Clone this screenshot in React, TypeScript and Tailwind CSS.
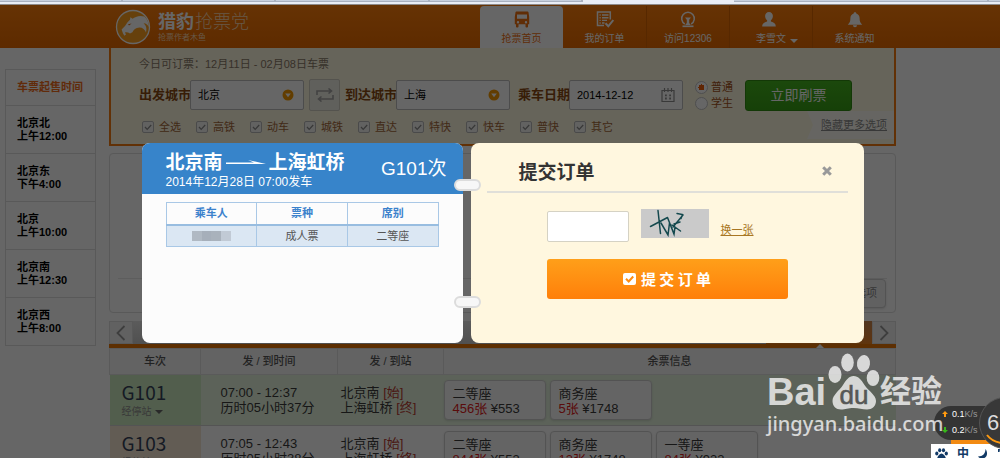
import React from 'react';

const saleTimes = [
  ['北京北', '上午12:00'],
  ['北京东', '下午4:00'],
  ['北京', '上午10:00'],
  ['北京南', '上午12:30'],
  ['北京西', '上午8:00'],
];

const trainTypes = ['全选', '高铁', '动车', '城铁', '直达', '特快', '快车', '普快', '其它'];

type Seat = { name: string; left: string; price: string };
type Train = { no: string; time: string; duration: string; seats: Seat[]; current: boolean };

const trains: Train[] = [
  {
    no: 'G101',
    time: '07:00 - 12:37',
    duration: '历时05小时37分',
    current: true,
    seats: [
      { name: '二等座', left: '456张', price: '¥553' },
      { name: '商务座', left: '5张', price: '¥1748' },
    ],
  },
  {
    no: 'G103',
    time: '07:05 - 12:43',
    duration: '历时05小时38分',
    current: false,
    seats: [
      { name: '二等座', left: '844张', price: '¥553' },
      { name: '商务座', left: '13张', price: '¥1748' },
      { name: '一等座', left: '84张', price: '¥933' },
    ],
  },
];

function BrowserStrip() {
  return (
    <div className="flex h-[5px] shrink-0 flex-col border-b border-[#8d8a8a] bg-[#e9edf5]">
      <div className="flex h-[2px]">
        <div className="w-[123px] border-r-2 border-b border-[#a9b1bf] bg-[#c6cfdd]" />
        <div className="w-[153px] border-r-2 border-b border-[#a9b1bf] bg-[#c6cfdd]" />
        <div className="w-[154px] border-r-2 border-b border-[#a9b1bf] bg-[#c6cfdd]" />
        <div className="w-[153px] border-r-2 border-b border-[#a9b1bf] bg-[#c6cfdd]" />
        <div className="w-[151px]" />
        <div className="w-[255px] border-r-2 border-b border-[#a9b1bf] bg-[#c6cfdd]" />
        <div className="flex-1 border-b border-[#a9b1bf] bg-[#c6cfdd]" />
      </div>
    </div>
  );
}

function CheetahLogo() {
  return (
    <svg viewBox="0 0 36 36" className="size-9 shrink-0" aria-hidden="true">
      <circle cx="18" cy="18" r="16.5" fill="#ffa01e" stroke="#fff" strokeWidth="1.3" />
      <path
        d="M8 24.5 6.6 20.5 10 17 12.5 13.2 15 10.8 15.4 8.2 17.6 9.8C20 8.2 24 6 29.4 7.6 32.5 10.5 34 14.5 33.8 18.4 33.2 16 31 14.4 28.6 14.3 32 17.4 31.6 20.4 31 23.6 30 20.4 27.6 18.4 24.4 18.4 20.6 18.6 18.600 20.6 17.400 23.200L15 24.4C13.4 23.4 11.4 23 10 23.4L11 25.6 9.4 26.8Z"
        fill="#fff"
      />
      <path d="M13 15.2 16.6 14.6 14 16.6Z" fill="#e07010" />
    </svg>
  );
}

function BusIcon() {
  return (
    <svg viewBox="0 0 16 17" className="h-[17px] w-4" fill="currentColor" aria-hidden="true">
      <path
        fillRule="evenodd"
        d="M3 .5h10c1 0 1.6.5 1.6 1.4L15.2 6v7.2H14v2.6c0 .5-.4.8-.9.8h-.7c-.5 0-.9-.3-.9-.8v-2.6h-7v2.6c0 .5-.4.8-.9.8h-.7c-.5 0-.9-.3-.9-.8v-2.6H.8V6l.6-4.1C1.400 1 2 .5 3 .5Zm0 3v4.300h10V3.500ZM4 10a1.200 1.200 0 1 0 0 2.400A1.200 1.200 0 0 0 4 10Zm8 0a1.200 1.200 0 1 0 0 2.400A1.200 1.200 0 0 0 12 10Z"
      />
    </svg>
  );
}

function OrdersIcon() {
  return (
    <svg viewBox="0 0 18 17" className="h-[17px] w-[18px]" fill="none" stroke="currentColor" aria-hidden="true">
      <path d="M14.300 8.500V1H1.500v13.500H8" strokeWidth="1.500" />
      <path d="M3.500 4h1.200M6 4h6.500M3.500 6.700h1.200M6 6.700h6.500M3.500 9.400h1.200M6 9.400h5M3.500 12h1.200M6 12h2.500" strokeWidth="1.400" />
      <path d="m9.500 12.300 2.800 3 5-6.300" strokeWidth="2" />
    </svg>
  );
}

function RailIcon() {
  return (
    <svg viewBox="0 0 16 17" className="h-[17px] w-4" fill="none" stroke="currentColor" aria-hidden="true">
      <path d="M4.800 13A6.300 6.300 0 1 1 11.200 13" strokeWidth="1.500" />
      <path d="M5 6.500h6L9.200 8.800V12l1.600 2H5.200l1.600-2V8.800Z" fill="currentColor" stroke="none" />
      <path d="M2.500 15.300h11" strokeWidth="1.700" />
    </svg>
  );
}

function UserIcon() {
  return (
    <svg viewBox="0 0 16 17" className="h-[17px] w-4" fill="currentColor" aria-hidden="true">
      <path d="M8 1c2.300 0 3.900 1.700 3.900 4.100 0 1.800-.8 3.400-2 4.200v1.100c2.900.7 4.900 2 4.900 5.100H1.200c0-3.100 2-4.400 4.900-5.100V9.300c-1.200-.8-2-2.400-2-4.200C4.100 2.700 5.700 1 8 1Z" />
    </svg>
  );
}

function BellIcon() {
  return (
    <svg viewBox="0 0 16 17" className="h-[17px] w-4" fill="currentColor" aria-hidden="true">
      <path d="M8 1.200c.8 0 1.300.5 1.300 1.200 2 .6 3.300 2.300 3.300 4.600 0 3.300.7 4.800 2.600 6.800H.8C2.700 11.800 3.400 10.300 3.400 7c0-2.300 1.300-4 3.300-4.600 0-.7.500-1.200 1.300-1.200ZM6 14.300h4c0 1.200-.8 2-2 2s-2-.8-2-2Z" />
    </svg>
  );
}

function Header() {
  return (
    <header className="flex h-[43px] shrink-0 items-end justify-between bg-linear-to-b from-[#ff7f0c] to-[#e96a00] pr-[104px] pl-[115px] text-white">
      <div className="flex h-full items-center gap-[7px]">
        <CheetahLogo />
        <div className="flex flex-col">
          <h1 className="flex gap-px text-[18px] leading-[22px]">
            <span className="font-bold">猎豹</span>
            <span className="font-light text-[#ffd9b0]">抢票党</span>
          </h1>
          <span className="text-[8px] leading-[10px] text-[#ffd9b0]">抢票作者木鱼</span>
        </div>
      </div>
      <nav className="flex h-[42px] text-[10px] leading-[14px]">
        <a href="#home" className="flex w-[83px] flex-col items-center gap-1 rounded-t bg-white pt-[5px] text-[#f0700f]">
          <BusIcon />
          抢票首页
        </a>
        <a href="#orders" className="flex w-[84px] flex-col items-center gap-1 border-r border-[#d96500] pt-[5px]">
          <OrdersIcon />
          我的订单
        </a>
        <a href="#12306" className="flex w-[83px] flex-col items-center gap-1 border-r border-[#d96500] pt-[5px]">
          <RailIcon />
          访问12306
        </a>
        <a href="#user" className="flex w-[83px] flex-col items-center gap-1 border-r border-[#d96500] pt-[5px]">
          <span className="mr-1">
            <UserIcon />
          </span>
          <span className="flex items-center gap-1 pl-3">
            李雪文
            <svg viewBox="0 0 8 4" className="mt-1 h-1 w-2" fill="currentColor" aria-hidden="true">
              <path d="M0 0h8L4 4Z" />
            </svg>
          </span>
        </a>
        <a href="#notice" className="flex w-[83px] flex-col items-center gap-1 pt-[5px]">
          <BellIcon />
          系统通知
        </a>
      </nav>
    </header>
  );
}

function Sidebar() {
  return (
    <aside className="mt-[21px] w-[91px] shrink-0 self-start border border-[#dedede] text-[11px] leading-[13px] font-bold text-black">
      <h2 className="flex h-[35px] items-center pl-[11px] text-[#f26c1b]">车票起售时间</h2>
      <ul>
        {saleTimes.map(([city, time]) => (
          <li key={city} className="flex h-12 flex-col justify-center border-t border-[#dedede] pl-[11px]">
            <span>{city}</span>
            <span>{time}</span>
          </li>
        ))}
      </ul>
    </aside>
  );
}

function CityField({ id, label, value }: { id: string; label: string; value: string }) {
  return (
    <div className="flex items-center">
      <label htmlFor={id} className="w-[51px] text-[13px] font-bold whitespace-nowrap text-[#8a4a12]">
        {label}
      </label>
      <div className="flex h-[30px] w-[114px] items-center rounded-xs border border-[#bdbdbd] bg-white pr-[9px] pl-[7px]">
        <input id={id} defaultValue={value} className="w-full min-w-0 text-[11px] text-black outline-none" />
        <svg viewBox="0 0 12 12" className="size-3 shrink-0" aria-hidden="true">
          <circle cx="6" cy="6" r="5.500" fill="#f59a00" />
          <path d="M3.200 4.500h5.600L6 8.300Z" fill="#fff" />
        </svg>
      </div>
    </div>
  );
}

function SearchPanel() {
  return (
    <form className="flex h-[98px] flex-col border-x-2 border-b-2 border-[#f57c10] bg-[#fff9e1] pl-7 text-[11px]">
      <p className="mt-2 h-4 leading-[16px] text-[#8a7a68]">今日可订票：12月11日 - 02月08日车票</p>
      <div className="mt-[7px] flex items-center">
        <CityField id="from" label="出发城市" value="北京" />
        <button
          type="button"
          aria-label="交换城市"
          className="mx-[5px] flex h-8 w-[31px] items-center justify-center rounded-xs border border-[#d2cfc4] bg-[#f1efe6] text-[#a5a5a5]"
        >
          <svg viewBox="0 0 18 14" className="h-3.5 w-[18px]" fill="none" stroke="currentColor" strokeWidth="1.600" aria-hidden="true">
            <path d="M1 7V3h14M12.500.5 15.500 3l-3 2.500M17 7v4H3M5.500 8.500l-3 2.500 3 2.500" />
          </svg>
        </button>
        <CityField id="to" label="到达城市" value="上海" />
        <div className="ml-2 flex items-center">
          <label htmlFor="date" className="w-[51px] text-[13px] font-bold whitespace-nowrap text-[#8a4a12]">
            乘车日期
          </label>
          <div className="flex h-[30px] w-[114px] items-center rounded-xs border border-[#bdbdbd] bg-white px-[7px]">
            <input id="date" defaultValue="2014-12-12" className="w-full min-w-0 text-[11px] text-black outline-none" />
            <svg viewBox="0 0 14 14" className="size-3.5 shrink-0 text-[#8f8f8f]" fill="none" stroke="currentColor" aria-hidden="true">
              <path d="M1 2.500h12v11H1ZM3.500 0v4M7 0v4M10.500 0v4" strokeWidth="1.200" />
              <path d="M4 7.300h1.800M8.200 7.300H10M4 10.500h1.800M8.200 10.500H10" strokeWidth="1.800" />
            </svg>
          </div>
        </div>
        <fieldset className="ml-3 flex flex-col text-[#a4531a]">
          <label className="flex h-4 items-center gap-[3px] leading-4">
            <input
              type="radio"
              name="kind"
              defaultChecked
              className="size-[13px] appearance-none rounded-full border border-[#c4c4c4] bg-white checked:bg-[radial-gradient(circle,#f0600a_0_3px,#fff_3px)]"
            />
            普通
          </label>
          <label className="flex h-4 items-center gap-[3px] leading-4">
            <input
              type="radio"
              name="kind"
              className="size-[13px] appearance-none rounded-full border border-[#c4c4c4] bg-white checked:bg-[radial-gradient(circle,#f0600a_0_3px,#fff_3px)]"
            />
            学生
          </label>
        </fieldset>
        <button type="button" className="ml-3 h-[31px] w-[107px] rounded-[3px] border border-[#308c12] bg-linear-to-b from-[#45b41f] to-[#38a015] text-[14px] text-white">
          立即刷票
        </button>
      </div>
      <div className="flex items-start justify-between">
        <div className="flex pt-2 pl-[3px] text-[#a4683a]">
          {trainTypes.map((t) => (
            <label key={t} className="flex h-4 w-[54px] items-center gap-[5px]">
              <span className="relative flex">
                <input type="checkbox" defaultChecked className="size-3 appearance-none rounded-xs border border-[#b9b9b9] bg-[#f6f6f2]" />
                <svg viewBox="0 0 12 12" className="pointer-events-none absolute inset-0 size-3" fill="none" stroke="#8c8c8c" strokeWidth="1.300" aria-hidden="true">
                  <path d="m3 6 2.200 2.400L9.200 4" />
                </svg>
              </span>
              {t}
            </label>
          ))}
        </div>
        <a
          href="#hide"
          className="flex h-7 w-[87px] items-center justify-end bg-[#fffdf4] pr-[7px] text-[#8c8c8c] underline [clip-path:polygon(0_0,100%_0,100%_100%,0_100%,6px_50%)]"
        >
          隐藏更多选项
        </a>
      </div>
    </form>
  );
}

function FilterPanel() {
  return (
    <section className="mt-[7px] flex h-40 flex-col justify-end rounded border border-[#dedede] px-2">
      <div className="flex h-[34px] items-start justify-end border-t border-[#e9e9e9]">
        <button type="button" className="mr-px h-[29px] rounded-sm border border-[#cfcfcf] bg-[#f3f3f3] px-2 text-[11px] text-[#8c8c8c] shadow-sm">
          更多选项
        </button>
      </div>
    </section>
  );
}

function DateBar() {
  return (
    <div className="mt-2 flex h-[27px] shrink-0 border-b-4 border-[#e97707]">
      <button type="button" aria-label="前一天" className="flex w-6 items-center justify-center border border-[#dedede] bg-[#f3f3f3] text-[#9a9a9a]">
        <svg viewBox="0 0 10 16" className="h-4 w-2.5" fill="none" stroke="currentColor" strokeWidth="1.800" aria-hidden="true">
          <path d="M8.500 1 1.500 8l7 7" />
        </svg>
      </button>
      <div className="flex-1 bg-linear-to-b from-[#e4e4e4] to-[#c8c8c8]" />
      <div className="relative w-[106px] bg-linear-to-b from-[#c98850] to-[#ef8420]">
        <svg viewBox="0 0 8 4" className="absolute -bottom-1 left-[50px] h-1 w-2" fill="#fff" aria-hidden="true">
          <path d="M4 0 8 4H0Z" />
        </svg>
      </div>
      <button type="button" aria-label="后一天" className="flex w-6 items-center justify-center border border-[#dedede] bg-[#f3f3f3] text-[#9a9a9a]">
        <svg viewBox="0 0 10 16" className="h-4 w-2.5" fill="none" stroke="currentColor" strokeWidth="1.800" aria-hidden="true">
          <path d="m1.500 1 7 7-7 7" />
        </svg>
      </button>
    </div>
  );
}

function TrainTable() {
  return (
    <table className="w-full shrink-0 table-fixed border-collapse text-[13px] leading-[15px] text-[#3a3a3a]">
      <colgroup>
        <col className="w-[91px]" />
        <col className="w-[137px]" />
        <col className="w-[106px]" />
        <col />
      </colgroup>
      <thead>
        <tr className="h-[26px] bg-[#f7f7f7] text-[11px] text-[#555]">
          <th className="border border-[#e2e2e2] font-medium">车次</th>
          <th className="border border-[#e2e2e2] font-medium">发 / 到时间</th>
          <th className="border border-[#e2e2e2] font-medium">发 / 到站</th>
          <th className="border border-[#e2e2e2] font-medium">余票信息</th>
        </tr>
      </thead>
      <tbody>
        {trains.map((t) => (
          <tr key={t.no} className={t.current ? 'h-[51px] border-b border-[#d2d2d2] bg-[#e6f5df]' : 'h-[51px] border-b border-[#d2d2d2]'}>
            <td className={t.current ? 'bg-[#cdebc0] pl-3' : 'bg-[#f4e6d3] pl-3'}>
              <div className="font-['Noto_Sans_CJK_SC',sans-serif] text-[19px] leading-[24px] text-[#35435a]">{t.no}</div>
              <a href="#stops" className="flex items-center gap-[3px] text-[10px] leading-[16px] text-[#8f8f8f]">
                经停站
                <svg viewBox="0 0 8 4" className="h-1 w-2" fill="#666" aria-hidden="true">
                  <path d="M0 0h8L4 4Z" />
                </svg>
              </a>
            </td>
            <td className="pl-5">
              <div>{t.time}</div>
              <div>{t.duration}</div>
            </td>
            <td className="pl-[3px] whitespace-nowrap">
              <div>
                北京南 <span className="text-[#b83c32]">[始]</span>
              </div>
              <div>
                上海虹桥 <span className="text-[#b83c32]">[终]</span>
              </div>
            </td>
            <td>
              <div className="flex gap-1">
                {t.seats.map((s) => (
                  <div key={s.name} className="h-10 w-[102px] rounded border border-[#d0d0d0] bg-[#fbfbfb] px-2 pt-[5px] shadow-sm">
                    <div>{s.name}</div>
                    <div>
                      <span className="text-[#e02020]">{s.left}</span> {s.price}
                    </div>
                  </div>
                ))}
              </div>
            </td>
          </tr>
        ))}
      </tbody>
    </table>
  );
}

function TicketCard() {
  return (
    <section className="w-[321px] overflow-hidden rounded-lg bg-[#fcfcfc]">
      <div className="flex h-[51px] items-center justify-between bg-[#3784ca] pr-4 pl-6 text-white">
        <div className="flex flex-col pt-1">
          <h2 className="flex items-center gap-[3px] text-[19px] leading-[23px] font-bold">
            北京南
            <svg viewBox="0 0 40 10" className="h-2.5 w-10" fill="#fff" aria-hidden="true">
              <path d="M0 4.500h28L22 2 40 6H0Z" />
            </svg>
            上海虹桥
          </h2>
          <p className="text-[12px] leading-[16px]">2014年12月28日 07:00发车</p>
        </div>
        <div className="text-[19px] leading-[22px]">G101次</div>
      </div>
      <table className="mx-6 mt-2 w-[273px] table-fixed border-collapse text-center text-[11px]">
        <thead>
          <tr className="h-[22px] border-b-2 border-[#98bde0] text-[#3c82cc]">
            <th className="border border-[#a9c8e6] font-bold">乘车人</th>
            <th className="border border-[#a9c8e6] font-bold">票种</th>
            <th className="border border-[#a9c8e6] font-bold">席别</th>
          </tr>
        </thead>
        <tbody>
          <tr className="h-[22px] bg-[#dbe7f3] text-[#555]">
            <td className="border border-[#a9c8e6]">
              <div className="mx-auto flex h-2.5 w-[39px]" aria-hidden="true">
                <span className="flex-1 bg-[#b0b9c3]" />
                <span className="flex-1 bg-[#a6afba]" />
                <span className="flex-1 bg-[#a9b2bc]" />
                <span className="flex-1 bg-[#c1cad5]" />
              </div>
            </td>
            <td className="border border-[#a9c8e6]">成人票</td>
            <td className="border border-[#a9c8e6]">二等座</td>
          </tr>
        </tbody>
      </table>
    </section>
  );
}

function OrderForm() {
  return (
    <form className="flex w-[393px] flex-col rounded-lg bg-[#fff7df] px-4">
      <div className="flex h-[50px] items-center justify-between border-b-2 border-[#e0dfd9] pt-2 pr-4 pl-8">
        <h2 className="pt-1 text-[19px] leading-[24px] font-bold text-[#333]">提交订单</h2>
        <button type="button" aria-label="关闭" className="flex text-[#999]">
          <svg viewBox="0 0 10 10" className="size-2.5" stroke="currentColor" strokeWidth="3" aria-hidden="true">
            <path d="m1.200 1.200 7.600 7.600M8.800 1.200 1.200 8.800" />
          </svg>
        </button>
      </div>
      <div className="mt-4 flex items-start pl-[60px]">
        <input aria-label="验证码" className="mt-[2px] h-[31px] w-[82px] rounded-xs border border-[#d5d2c4] bg-white px-2 text-[13px] outline-none" />
        <svg viewBox="0 0 68 29" className="ml-3 h-[29px] w-[68px] bg-[#cacaca]" fill="none" stroke="#14494e" strokeWidth="1.500" role="img" aria-label="验证码图片">
          <path d="M9.500 17.500 26.500 8.500M17 1.500l2.500 23M20 14l7 12 1.500-12M26.500 8.500 33 25l1-7M32 18 42 6M36 4.500l5.500 1-1.500 4M31 16l8.500 6M33 15l6-2" strokeLinecap="round" />
        </svg>
        <a href="#refresh" className="ml-3 mt-[13px] text-[11px] leading-[16px] text-[#a87622] underline">
          换一张
        </a>
      </div>
      <button
        type="button"
        className="mt-[17px] ml-[60px] flex h-10 w-[241px] items-center justify-center gap-[5px] rounded-[3px] bg-linear-to-b from-[#ff9f19] to-[#ff7f09] font-['Noto_Sans_CJK_SC',sans-serif] text-[15px] font-bold text-white"
      >
        <svg viewBox="0 0 13 12" className="h-3 w-[13px]" aria-hidden="true">
          <rect width="13" height="12" rx="2" fill="#fff" />
          <path d="m3 5.800 2.700 2.700L10.200 3.500" fill="none" stroke="#ff8c12" strokeWidth="2" />
        </svg>
        提 交 订 单
      </button>
    </form>
  );
}

function OrderDialog() {
  return (
    <div className="absolute inset-x-0 top-[5px] bottom-0 flex items-start justify-center bg-black/60 pt-[138px] pl-[5px]">
      <div role="dialog" aria-label="提交订单" className="relative flex h-[200px] gap-2">
        <TicketCard />
        <OrderForm />
        <span className="absolute top-9 left-[312px] h-3 w-[27px] rounded-md border-2 border-[#dcdcdc] bg-[#f7f7f7]" />
        <span className="absolute top-[153px] left-[312px] h-3 w-[27px] rounded-md border-2 border-[#dcdcdc] bg-[#f7f7f7]" />
      </div>
    </div>
  );
}

function Watermark() {
  return (
    <div className="pointer-events-none absolute right-[55px] bottom-[20px] flex w-[178px] flex-col text-white opacity-75">
      <div className="flex items-end">
        <span className="w-[60px] text-[38px] leading-[36px] font-bold">Bai</span>
        <svg viewBox="0 0 53 57" className="h-[57px] w-[53px]" fill="currentColor" aria-hidden="true">
          <ellipse cx="8" cy="21.500" rx="6.500" ry="8.500" />
          <ellipse cx="20.500" cy="9.500" rx="6.300" ry="9" />
          <ellipse cx="36.500" cy="10.500" rx="6.500" ry="8.500" transform="rotate(8 36.500 10.500)" />
          <ellipse cx="46" cy="25" rx="6.300" ry="8" />
          <path d="M26.500 23c5 0 8 4 11 9 4 6 11.500 10 11.500 16 0 5-4 8.500-9 8.500-5 0-8-1.500-13.500-1.500S18.500 56.500 14 56.500c-5 0-8.500-3.500-8.500-8.500 0-6 6.500-10 10.500-16 3-5 6-9 10.500-9Z" />
          <text x="27" y="51" textAnchor="middle" fontSize="26" fontFamily="Liberation Sans" fill="#555" stroke="#555" strokeWidth=".6">
            du
          </text>
        </svg>
        <span className="text-[31px] leading-[36px] font-bold">经验</span>
      </div>
      <span className="font-['Noto_Sans',sans-serif] text-[20px] leading-[28px] font-medium">jingyan.baidu.com</span>
    </div>
  );
}

function SpeedWidget() {
  return (
    <div className="absolute right-0 bottom-0 flex w-[69px] flex-col overflow-hidden text-[9px] leading-[16px] text-white">
      <div className="flex items-center">
        <div className="ml-[3px] h-[34px] w-[66px] shrink-0 rounded-l-full bg-[#343434] pl-2">
          <div className="flex items-center gap-1">
            <svg viewBox="0 0 6 6" className="size-1.5" fill="#ff9a10" aria-hidden="true">
              <path d="M3 0 6 3H4v3H2V3H0Z" />
            </svg>
            <span>
              0.1<span className="text-[#999]">K/s</span>
            </span>
          </div>
          <div className="flex items-center gap-1">
            <svg viewBox="0 0 6 6" className="size-1.5" fill="#36b81a" aria-hidden="true">
              <path d="M3 6 0 3h2V0h2v3h2Z" />
            </svg>
            <span>
              0.2<span className="text-[#999]">K/s</span>
            </span>
          </div>
        </div>
      </div>
      <div className="ml-5 h-1 bg-[#f28a12]" />
      <div className="flex h-3.5 items-start gap-[9px] bg-white pl-1 text-[12px] leading-[20px] font-bold text-[#123a66]">
        <svg viewBox="0 0 13 13" className="mt-1 size-[13px] shrink-0" fill="currentColor" aria-hidden="true">
          <ellipse cx="1.800" cy="5.500" rx="1.600" ry="2" />
          <ellipse cx="4.700" cy="2.200" rx="1.600" ry="2" />
          <ellipse cx="8.500" cy="2.200" rx="1.600" ry="2" />
          <ellipse cx="11.300" cy="5.500" rx="1.600" ry="2" />
          <path d="M6.500 5.500c2 0 4.500 3.500 4.500 5.500s-2 2-4.500 2S2 13 2 11s2.500-5.500 4.500-5.500Z" />
        </svg>
        中
        <svg viewBox="0 0 10 10" className="mt-[5px] size-2.5 shrink-0" fill="currentColor" aria-hidden="true">
          <path d="M7.500 0c3 4 1.500 9.500-3.500 9.500C2 9.500.5 8.500 0 7.500 5 7.500 7.500 4.500 7.500 0Z" />
        </svg>
        <svg viewBox="0 0 8 8" className="mt-[5px] size-2 shrink-0" fill="currentColor" aria-hidden="true">
          <path d="M1 0h2L2.500 3H1Z" />
        </svg>
      </div>
    </div>
  );
}

function SpeedDial() {
  return (
    <div className="absolute right-0 bottom-[9px] h-[52px] w-[21px] overflow-hidden">
      <div className="flex size-[52px] items-center rounded-full border border-[#555] bg-[#383838] pl-[7px] text-[22px] leading-[24px] font-light text-[#ddd]">63%</div>
      <svg viewBox="0 0 21 52" className="absolute inset-0 h-[52px] w-[21px]" fill="none" stroke="#ff9a10" strokeWidth="2" aria-hidden="true">
        <path d="M8 38c3 4 8 7 14 8" />
      </svg>
    </div>
  );
}

export default function App() {
  return (
    <div className="relative flex h-screen flex-col overflow-hidden bg-white font-['Liberation_Sans','Noto_Sans_CJK_SC',sans-serif]">
      <BrowserStrip />
      <Header />
      <div className="flex min-h-0 flex-1 gap-[13px] overflow-hidden pr-[104px] pl-[5px]">
        <Sidebar />
        <main className="flex min-w-0 flex-1 flex-col">
          <div className="shrink-0">
            <SearchPanel />
            <FilterPanel />
          </div>
          <DateBar />
          <TrainTable />
        </main>
      </div>
      <OrderDialog />
      <SpeedWidget />
      <SpeedDial />
      <Watermark />
    </div>
  );
}
